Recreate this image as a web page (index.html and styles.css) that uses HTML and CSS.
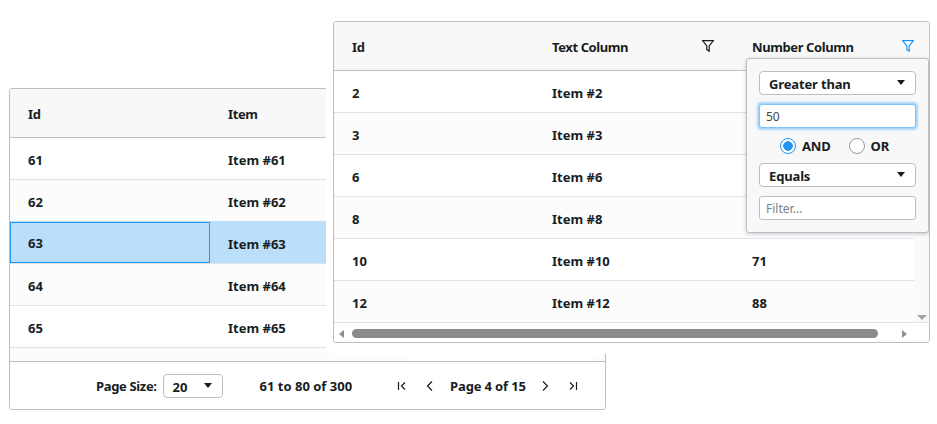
FILE: index.html
```html
<!DOCTYPE html>
<html lang="en">
<head>
<meta charset="utf-8">
<title>Data grids</title>
<link rel="stylesheet" href="styles.css">
</head>
<body>
<div class="canvas">
  <section class="grid grid-back">
    <div class="row head"><div class="cell col-a">Id</div><div class="cell">Item</div></div>
    <div class="row"><div class="cell col-a">61</div><div class="cell">Item #61</div></div>
    <div class="row odd"><div class="cell col-a">62</div><div class="cell">Item #62</div></div>
    <div class="row selected"><div class="cell col-a focus">63</div><div class="cell">Item #63</div></div>
    <div class="row odd"><div class="cell col-a">64</div><div class="cell">Item #64</div></div>
    <div class="row"><div class="cell col-a">65</div><div class="cell">Item #65</div></div>
    <div class="row odd stub"></div>
    <footer class="pager">
      <span class="size-label">Page Size:</span>
      <div class="select size"><span>20</span><i class="caret"></i></div>
      <span class="range">61 to 80 of 300</span>
      <div class="nav">
        <svg class="ico" viewBox="0 0 12 12"><path d="M2.500 2v8M9 2.500 5.500 6 9 9.500"/></svg>
        <svg class="ico" viewBox="0 0 12 12"><path d="M8 1.500 3.500 6 8 10.500"/></svg>
        <span class="page">Page 4 of 15</span>
        <svg class="ico" viewBox="0 0 12 12"><path d="M4 1.500 8.500 6 4 10.500"/></svg>
        <svg class="ico" viewBox="0 0 12 12"><path d="M9.500 2v8M3 2.500 6.500 6 3 9.500"/></svg>
      </div>
    </footer>
  </section>

  <section class="grid grid-front">
    <div class="row head">
      <div class="cell col-a">Id</div>
      <div class="cell col-b">Text Column<svg class="funnel" viewBox="0 0 12 12"><path d="M.6.6h10.800L7.200 6v5.200L4.800 9.600V6z"/></svg></div>
      <div class="cell col-c">Number Column<svg class="funnel active" viewBox="0 0 12 12"><path d="M.6.6h10.800L7.200 6v5.200L4.800 9.600V6z"/></svg></div>
    </div>
    <div class="row"><div class="cell col-a">2</div><div class="cell col-b">Item #2</div></div>
    <div class="row odd"><div class="cell col-a">3</div><div class="cell col-b">Item #3</div></div>
    <div class="row"><div class="cell col-a">6</div><div class="cell col-b">Item #6</div></div>
    <div class="row odd"><div class="cell col-a">8</div><div class="cell col-b">Item #8</div></div>
    <div class="row"><div class="cell col-a">10</div><div class="cell col-b">Item #10</div><div class="cell col-c">71</div></div>
    <div class="row odd"><div class="cell col-a">12</div><div class="cell col-b">Item #12</div><div class="cell col-c">88</div></div>
    <div class="vscroll"><i class="v-arrow"></i></div>
    <div class="hscroll">
      <i class="h-arrow left"></i>
      <div class="thumb"></div>
      <i class="h-arrow right"></i>
    </div>
    <div class="menu">
      <div class="select"><span>Greater than</span><i class="caret"></i></div>
      <div class="input focused">50</div>
      <div class="radios">
        <span class="radio checked"></span><span>AND</span>
        <span class="radio or"></span><span>OR</span>
      </div>
      <div class="select"><span>Equals</span><i class="caret"></i></div>
      <div class="input placeholder">Filter...</div>
    </div>
  </section>
</div>
</body>
</html>
```
FILE: styles.css
```css
* { box-sizing: border-box; }
html, body { margin: 0; background: #fff; }
body { font: 700 13px/18px "Noto Sans", "Open Sans", sans-serif; letter-spacing: -.15px; color: #181d1f; }
.canvas { position: relative; width: 937px; height: 424px; overflow: hidden; }

.grid { position: absolute; width: 597px; height: 322px; background: #fff; border: 1px solid #babfc7; border-radius: 3px; overflow: hidden; }
.grid-back { left: 9px; top: 88px; display: flex; flex-direction: column; }
.grid-front { left: 333px; top: 21px; box-shadow: 0 4px 0 7px #fff; }

.row { display: flex; flex: none; height: 42px; border-bottom: 1px solid #dde2eb; background: #fff; letter-spacing: 0; }
.row.odd { background: #fcfcfc; }
.row.head { height: 49px; background: #f8f8f8; border-bottom-color: #babfc7; letter-spacing: -.4px; }
.row.selected { background: #bbdefb; }
.row:has(+ .selected) { border-bottom-color: #bbdefb; }
.row.stub { flex: 1; height: auto; border-bottom: 0; background: linear-gradient(to right, #fcfcfc 400px, #fff 400px, #fff 581px, #fcfcfc 581px); }
.cell { display: flex; flex: none; align-items: center; padding: 2px 18px 0; white-space: nowrap; }
.col-a { width: 200px; }
.col-b, .col-c { width: 200px; justify-content: space-between; padding-right: 20px; }
.cell.focus { border: 1px solid #2196f3; padding: 1px 17px 0; }

.funnel { width: 12px; height: 12px; fill: none; stroke: #181d1f; stroke-width: 1.2; margin-top: -3px; }
.funnel.active { stroke: #2196f3; }

.pager { height: 48px; border-top: 1px solid #babfc7; display: flex; align-items: center; padding: 1px 0 0 86px; background: #fff; flex: none; }
.size-label { letter-spacing: -.35px; }
.select { display: flex; align-items: center; justify-content: space-between; height: 24px; border: 1px solid #babfc7; border-radius: 4px; padding: 2px 10px 0 9px; background: #fff; flex: none; }
.select.size { width: 60px; margin: -1px 0 0 6px; }
.caret { width: 0; height: 0; margin-top: -3px; border: 4.500px solid transparent; border-top: 5.500px solid #181d1f; border-bottom: 0; }
.range { margin-left: 37px; letter-spacing: 0; }
.nav { display: flex; align-items: center; margin-left: 44px; }
.ico { width: 12px; height: 12px; fill: none; stroke: #181d1f; stroke-width: 1.2; flex: none; }
.ico + .ico { margin-left: 16px; }
.page { margin: 0 13px 0 14px; }
.page + .ico + .ico { margin-left: 16px; }

.menu { position: absolute; left: 412px; top: 36px; width: 183px; height: 175px; background: #f8f8f8; border: 1px solid #babfc7; border-radius: 3px; box-shadow: 0 1px 4px rgba(0,0,0,.2); padding: 12px 12px 0; display: flex; flex-direction: column; gap: 9px; }
.input { height: 24px; flex: none; border: 1px solid #babfc7; border-radius: 3px; background: #fff; font-weight: 400; font-size: 12px; letter-spacing: 0; line-height: 24px; padding-left: 6px; }
.input.focused { border-color: #7fc4f8; box-shadow: 0 0 2px 1.500px #a6d5fa; color: #444; }
.input.placeholder { color: #7b8085; }
.radios { display: flex; align-items: center; justify-content: center; height: 17px; flex: none; padding-right: 6px; }
.radio { width: 16px; height: 16px; flex: none; border-radius: 50%; border: 1.500px solid #999; background: #fff; margin-right: 6px; }
.radio.or { margin-left: 18px; }
.radio.checked { border-color: #2196f3; background: radial-gradient(circle, #2196f3 0 4.500px, #fff 5px); }

.vscroll { position: absolute; right: 0; top: 49px; bottom: 0; width: 15px; background: #fafafa; }
.v-arrow { position: absolute; right: 2px; bottom: 22px; width: 0; height: 0; border: 5px solid transparent; border-top: 5px solid #a3a3a3; border-bottom: 0; }
.hscroll { position: absolute; left: 0; right: 0; bottom: 0; height: 20px; background: #fff; border-top: 1px solid #dde2eb; }
.hscroll .thumb { position: absolute; left: 18px; width: 526px; height: 9px; top: 6px; border-radius: 5px; background: #8a8a8a; }
.h-arrow { position: absolute; top: 7px; width: 0; height: 0; border: 4px solid transparent; }
.h-arrow.left { left: 5px; border-left: 0; border-right: 5px solid #8f8f8f; }
.h-arrow.right { left: 568px; border-right: 0; border-left: 5px solid #8f8f8f; }
```
